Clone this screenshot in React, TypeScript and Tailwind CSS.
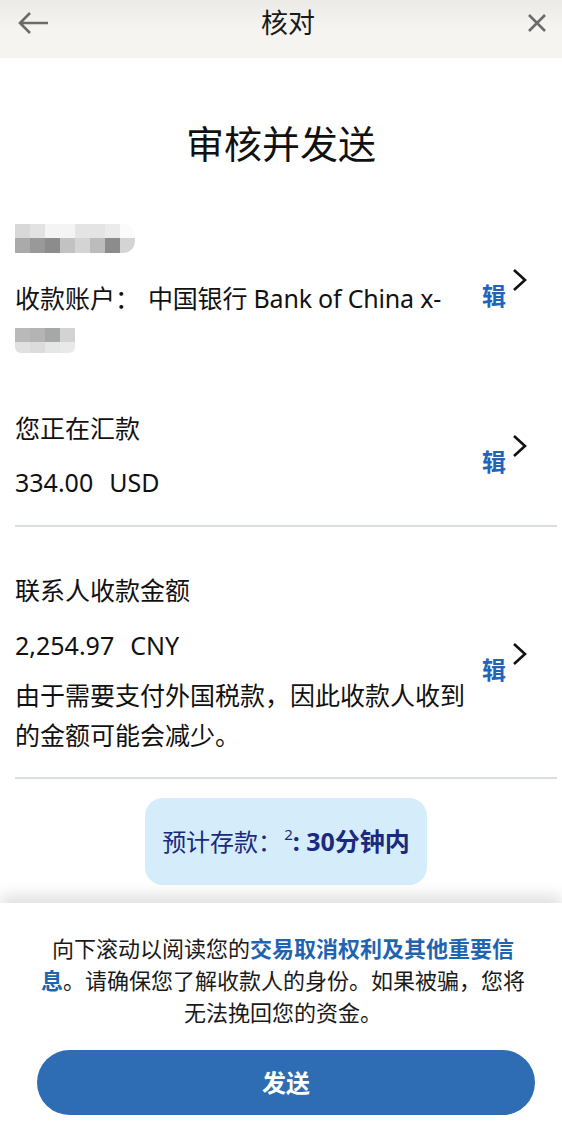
import type { ReactNode } from "react";

const font = { fontFamily: '"Noto Sans", "Noto Sans CJK SC", sans-serif' };

const blurTop = [
  ["#d8d8d8", "#e2e2e2", "#f4f4f4", "#f4f4f4", "#e4e4e4", "#e4e4e4", "#ebebeb", "#fbfbfb"],
  ["#aaaaaa", "#999999", "#8c8c8c", "#c2c2c2", "#d4d4d4", "#bcbcbc", "#8c8c8c", "#d4d4d4"],
];
const blurBottom = [
  ["#b9b9b9", "#b4b4b4", "#a6a8a7", "#d3d3d3"],
  ["#e1e1e1", "#dcdcdc", "#e6e6e6", "#e9e9e9"],
];

function Pixels({ rows, heights, className }: { rows: string[][]; heights: string[]; className: string }) {
  return (
    <div className={`flex w-fit flex-col overflow-hidden ${className}`}>
      {rows.map((row, i) => (
        <div key={i} className={`flex ${heights[i]}`}>
          {row.map((c, j) => (
            <div key={j} className="w-[15px]" style={{ backgroundColor: c }} />
          ))}
        </div>
      ))}
    </div>
  );
}

function Edit() {
  return (
    <div className="flex w-[47px] shrink-0 items-start">
      <span className="mt-[14px] text-[24px] font-semibold leading-[28px] text-[#1f64b8]">辑</span>
      <svg width="17" height="24" viewBox="0 0 17 24" className="ml-[5px]">
        <path d="M3 2 L14 12 L3 22" fill="none" stroke="#111" strokeWidth="2.6" />
      </svg>
    </div>
  );
}

function Row({ children }: { children: ReactNode }) {
  return (
    <div className="flex items-center pl-[15px] pr-[33px]">
      <div className="w-[462px]">{children}</div>
      <div className="ml-auto">
        <Edit />
      </div>
    </div>
  );
}

export default function App() {
  return (
    <div className="flex h-[1129px] flex-col overflow-hidden bg-white text-[#111]" style={font}>
      <header className="h-[58px] shrink-0 bg-gradient-to-b from-[#ebeae6] via-[#f5f4f0] to-[#f5f4f0]">
        <div className="flex h-[46px] items-center justify-between pl-[17px] pr-[14px]">
          <svg width="33" height="24" viewBox="0 0 33 24">
            <path d="M3 12 H31 M13 2 L3 12 L13 22" fill="none" stroke="#6b6b6b" strokeWidth="2.6" />
          </svg>
          <span className="text-[27px] leading-[32px] text-[#1a1a1a]">核对</span>
          <svg width="22" height="22" viewBox="0 0 22 22">
            <path d="M3 3 L19 19 M19 3 L3 19" fill="none" stroke="#6b6b6b" strokeWidth="2.6" />
          </svg>
        </div>
      </header>

      <main className="flex-1">
        <h1 className="mt-[61px] text-center text-[38px] leading-[48px]">审核并发送</h1>

        <div className="mt-[57px]">
          <Row>
            <Pixels rows={blurTop} heights={["h-[14px]", "h-[15px]"]} className="rounded-r-[12px]" />
            <div className="mt-[25px] text-[25px] leading-[40px]">
              收款账户：<span className="ml-[8px] tracking-[-0.2px]">中国银行 Bank of China x-</span>
            </div>
            <Pixels rows={blurBottom} heights={["h-[14px]", "h-[11px]"]} className="mt-[10px] rounded-b-[6px]" />
          </Row>
        </div>

        <div className="mt-[55px]">
          <Row>
            <div className="text-[25px] leading-[40px]">您正在汇款</div>
            <div className="mt-[14px] text-[25px] leading-[40px]">
              334.00<span className="ml-[16px]">USD</span>
            </div>
          </Row>
        </div>
        <div className="ml-[15px] mr-[5px] mt-[23px] h-[2px] bg-[#dcdfe1]" />

        <div className="mt-[43px]">
          <Row>
            <div className="text-[25px] leading-[40px]">联系人收款金额</div>
            <div className="mt-[15px] text-[25px] leading-[40px]">
              2,254.97<span className="ml-[16px]">CNY</span>
            </div>
            <p className="mt-[10px] text-[25px] leading-[40px]">由于需要支付外国税款，因此收款人收到的金额可能会减少。</p>
          </Row>
        </div>
        <div className="ml-[15px] mr-[5px] mt-[22px] h-[2px] bg-[#dcdfe1]" />

        <div className="mt-[19px] flex justify-center pl-[10px]">
          <div className="flex h-[87px] w-[282px] items-center justify-center rounded-[18px] bg-[#d5ecfa] text-[24px] text-[#1b2a7e]">
            <span>预计存款：</span>
            <sup className="ml-[2px] text-[15px]">2</sup>
            <span className="text-[25px] font-bold">: 30分钟内</span>
          </div>
        </div>
      </main>

      <footer className="h-[226px] shrink-0 bg-white pt-[29px] shadow-[0_-8px_14px_rgba(0,0,0,0.12)]">
        <p className="pl-[36px] pr-[32px] text-center text-[22px] leading-[32px] text-[#1a1a1a]">
          向下滚动以阅读您的<span className="font-semibold text-[#1f64b0]">交易取消权利及其他重要信息</span>。请确保您了解收款人的身份。如果被骗，您将无法挽回您的资金。
        </p>
        <div className="mt-[22px] pl-[37px] pr-[27px]">
          <button className="block h-[65px] w-full rounded-full bg-[#2e6cb3] text-[24px] font-bold text-white">
            发送
          </button>
        </div>
      </footer>
    </div>
  );
}
